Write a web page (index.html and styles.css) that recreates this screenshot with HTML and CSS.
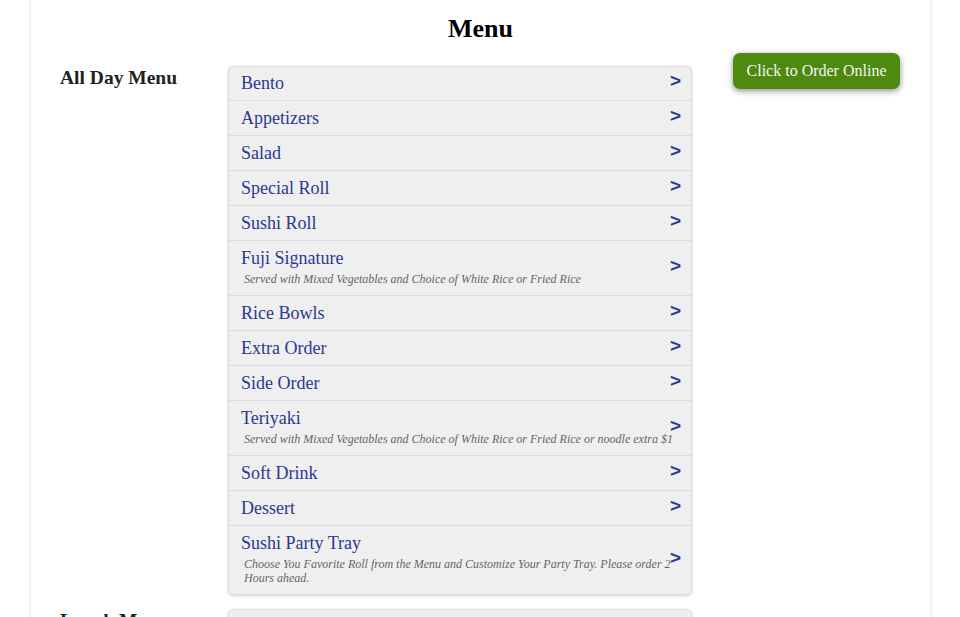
FILE: index.html
```html
<!DOCTYPE html>
<html>
<head>
<meta charset="utf-8">
<link rel="stylesheet" href="styles.css">
</head>
<body>
<div class="page">
  <h1 class="title">Menu</h1>
  <div class="sections">
    <section class="menu-section">
      <h2 class="section-name">All Day Menu</h2>
      <ul class="cat-list">
        <li class="cat"><div class="cat-text"><span class="cat-name">Bento</span></div><span class="arrow">&gt;</span></li>
        <li class="cat"><div class="cat-text"><span class="cat-name">Appetizers</span></div><span class="arrow">&gt;</span></li>
        <li class="cat"><div class="cat-text"><span class="cat-name">Salad</span></div><span class="arrow">&gt;</span></li>
        <li class="cat"><div class="cat-text"><span class="cat-name">Special Roll</span></div><span class="arrow">&gt;</span></li>
        <li class="cat"><div class="cat-text"><span class="cat-name">Sushi Roll</span></div><span class="arrow">&gt;</span></li>
        <li class="cat has-desc"><div class="cat-text"><span class="cat-name">Fuji Signature</span><span class="cat-desc">Served with Mixed Vegetables and Choice of White Rice or Fried Rice</span></div><span class="arrow">&gt;</span></li>
        <li class="cat"><div class="cat-text"><span class="cat-name">Rice Bowls</span></div><span class="arrow">&gt;</span></li>
        <li class="cat"><div class="cat-text"><span class="cat-name">Extra Order</span></div><span class="arrow">&gt;</span></li>
        <li class="cat"><div class="cat-text"><span class="cat-name">Side Order</span></div><span class="arrow">&gt;</span></li>
        <li class="cat has-desc"><div class="cat-text"><span class="cat-name">Teriyaki</span><span class="cat-desc">Served with Mixed Vegetables and Choice of White Rice or Fried Rice or noodle extra $1</span></div><span class="arrow">&gt;</span></li>
        <li class="cat"><div class="cat-text"><span class="cat-name">Soft Drink</span></div><span class="arrow">&gt;</span></li>
        <li class="cat"><div class="cat-text"><span class="cat-name">Dessert</span></div><span class="arrow">&gt;</span></li>
        <li class="cat has-desc"><div class="cat-text"><span class="cat-name">Sushi Party Tray</span><span class="cat-desc">Choose You Favorite Roll from the Menu and Customize Your Party Tray. Please order 2 Hours ahead.</span></div><span class="arrow">&gt;</span></li>
      </ul>
      <aside class="order-side">
        <a class="order-btn" href="#">Click to Order Online</a>
      </aside>
    </section>
    <section class="menu-section">
      <h2 class="section-name">Lunch Menu</h2>
      <ul class="cat-list">
        <li class="cat"><div class="cat-text"><span class="cat-name">Lunch Special</span></div><span class="arrow">&gt;</span></li>
      </ul>
    </section>
  </div>
</div>
</body>
</html>
```

FILE: styles.css
```css
html, body {
  margin: 0;
  padding: 0;
  background: #fff;
  height: 617px;
  overflow: hidden;
}
body {
  font-family: "Liberation Serif", "Times New Roman", serif;
}
.page {
  box-sizing: border-box;
  width: 903px;
  margin-left: 29px;
  min-height: 1200px;
  border-left: 2px solid #f3f3f3;
  border-right: 2px solid #f3f3f3;
  padding: 12px 29px 0 29px;
}
.title {
  margin: 0 0 20px 0;
  text-align: center;
  font-size: 26px;
  line-height: 34px;
  font-weight: bold;
  color: #000;
}
.sections {
  display: flex;
  flex-direction: column;
  gap: 14px;
}
.menu-section {
  display: grid;
  grid-template-columns: 168px 464px 1fr;
  align-items: start;
}
.section-name {
  margin: 0;
  padding-top: 1px;
  font-size: 19.5px;
  line-height: 22px;
  font-weight: bold;
  color: #222;
}
.cat-list {
  list-style: none;
  margin: 0;
  padding: 0;
  border: 1px solid #dedede;
  border-radius: 5px;
  overflow: hidden;
  box-shadow: 0 1px 3px rgba(0, 0, 0, 0.18);
  background: #efefef;
}
.cat {
  display: flex;
  align-items: center;
  padding: 6px 10px 6px 12px;
  border-top: 1px solid #dcdcdc;
}
.cat:first-child {
  border-top: 0;
  padding-top: 5px;
}
.cat.has-desc {
  padding-bottom: 9px;
}
.cat-text {
  flex: 1;
  display: flex;
  flex-direction: column;
  min-width: 0;
}
.cat-name {
  font-size: 18px;
  line-height: 22px;
  color: #2b3990;
}
.cat-desc {
  margin-top: 3px;
  margin-right: -12px;
  padding-left: 3px;
  font-size: 12px;
  line-height: 14px;
  font-style: italic;
  color: #666;
}
.arrow {
  flex: none;
  width: 11px;
  margin-bottom: 5px;
  font-family: "Liberation Sans", Arial, sans-serif;
  font-weight: bold;
  font-size: 19px;
  line-height: 12px;
  color: #2b3990;
}
.has-desc .arrow {
  margin-bottom: 1px;
}
.order-side {
  padding-left: 41px;
  margin-top: -13px;
}
.order-btn {
  display: inline-block;
  width: 167px;
  height: 36px;
  box-sizing: border-box;
  line-height: 36px;
  text-align: center;
  background: #4e8a0f;
  color: #f4f4f4;
  font-size: 16px;
  text-decoration: none;
  border-radius: 7px;
  box-shadow: 0 2px 6px rgba(0, 0, 0, 0.45);
}
```
